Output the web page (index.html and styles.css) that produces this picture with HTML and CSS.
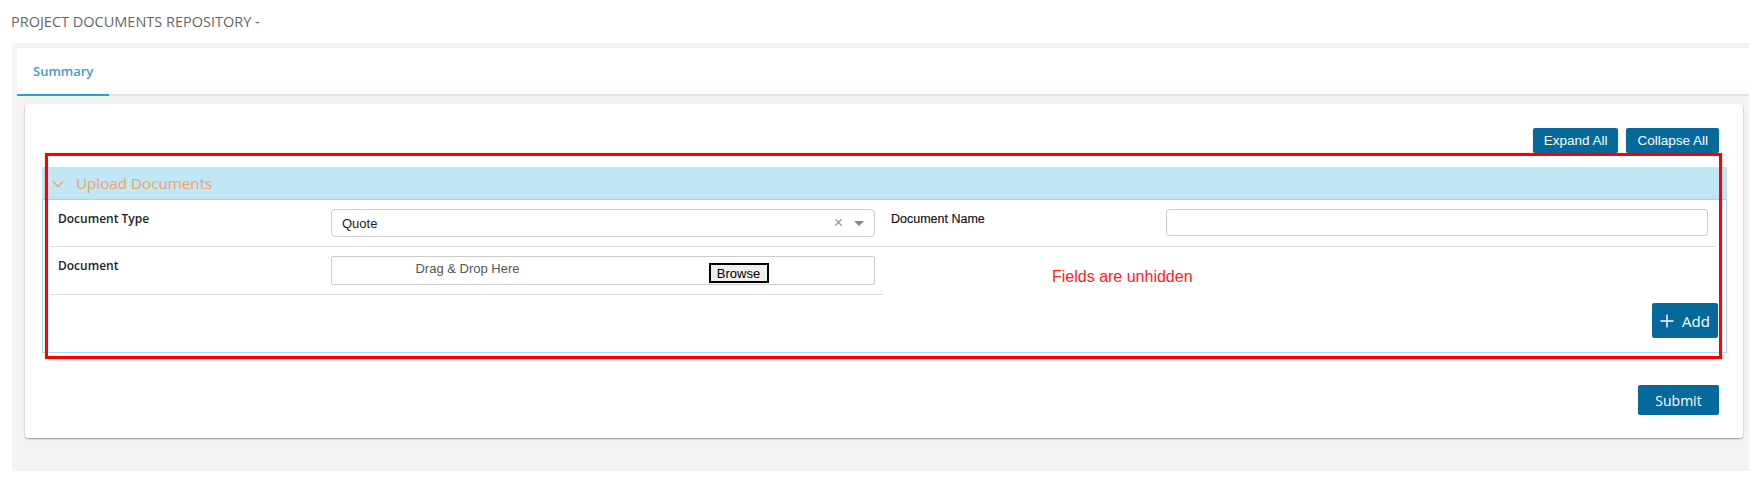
FILE: index.html
```html
<!DOCTYPE html>
<html lang="en">
<head>
<meta charset="utf-8">
<title>Project Documents Repository</title>
<link rel="stylesheet" href="styles.css">
</head>
<body>
<div class="page">
  <h1 class="page-title">PROJECT DOCUMENTS REPOSITORY -</h1>
  <div class="shell">
    <div class="tabs">
      <div class="tab active">Summary</div>
    </div>
    <div class="card">
      <div class="toolbar">
        <button class="btn btn-sm">Expand All</button>
        <button class="btn btn-sm">Collapse All</button>
      </div>
      <section class="accordion">
        <div class="acc-header">
          <svg class="chevron" width="12" height="8" viewBox="0 0 12 8"><path d="M1 1.5 L6 6.5 L11 1.5" fill="none" stroke="#f2a45a" stroke-width="1.5"/></svg>
          <span class="acc-title">Upload Documents</span>
        </div>
        <div class="acc-body">
          <div class="grid">
            <div class="field">
              <label class="field-label">Document Type</label>
              <div class="select">
                <span class="select-value">Quote</span>
                <span class="select-clear">×</span>
                <span class="select-arrow"></span>
              </div>
            </div>
            <div class="field">
              <label class="field-label alt">Document Name</label>
              <div class="text-input"></div>
            </div>
            <div class="field">
              <label class="field-label">Document</label>
              <div class="dropzone">
                <span class="drop-half drop-text">Drag &amp; Drop Here</span>
                <span class="drop-half"><span class="browse">Browse</span></span>
              </div>
            </div>
          </div>
          <div class="acc-actions">
            <button class="btn btn-add">
              <svg width="14" height="14" viewBox="0 0 14 14"><path d="M7 0.5 V13.5 M0.5 7 H13.5" stroke="#fff" stroke-width="1.4"/></svg>
              <span>Add</span>
            </button>
          </div>
        </div>
      </section>
      <div class="card-actions">
        <button class="btn btn-submit">Submit</button>
      </div>
    </div>
  </div>
  <div class="annot-box"></div>
  <div class="annot-text">Fields are unhidden</div>
</div>
</body>
</html>
```

FILE: styles.css
```css
html, body {
  margin: 0;
  padding: 0;
  background: #ffffff;
}

.page {
  position: relative;
  font-family: "Open Sans", "Noto Sans", sans-serif;
  color: #222;
}

.page-title {
  margin: 0;
  padding: 13px 0 0 11px;
  font-size: 14.5px;
  line-height: 18px;
  font-weight: 400;
  color: #666;
  letter-spacing: 0;
}

.shell {
  margin: 12px 0 0 12px;
  background: #f5f4f2;
  padding: 5px 0 33px 5px;
}

.tabs {
  display: flex;
  background: #ffffff;
  height: 46px;
  border-bottom: 2px solid #dde2e7;
}

.tab {
  padding: 0 16px;
  line-height: 46px;
  font-size: 13px;
  font-weight: 600;
  color: #3d9fcb;
}

.tab.active {
  border-bottom: 2px solid #2aa0cc;
  margin-bottom: -2px;
}

.card {
  margin: 8px 6px 0 8px;
  background: #ffffff;
  border-radius: 3px;
  box-shadow: 0 1px 2px rgba(0, 0, 0, 0.4);
  padding: 24px 16px 23px 17px;
}

.btn {
  border: none;
  background: #06699c;
  color: #ffffff;
  border-radius: 2px;
  cursor: pointer;
  padding: 0;
}

.toolbar {
  display: flex;
  justify-content: flex-end;
  gap: 8px;
  padding-right: 8px;
  margin-bottom: 14px;
}

.btn-sm {
  height: 25px;
  padding: 0 11px;
  font-family: "Liberation Sans", Arial, sans-serif;
  font-size: 13.5px;
  box-shadow: 0 1px 2px rgba(0, 0, 0, 0.15);
}

.accordion {
  display: block;
}

.acc-header {
  display: flex;
  align-items: center;
  height: 32px;
  background: #c1e6f6;
  border-bottom: 1px solid #9fd9f1;
  padding-left: 10px;
}

.chevron {
  display: block;
  margin-right: 12px;
  margin-top: 1px;
}

.acc-title {
  font-size: 15.2px;
  color: #f2a45a;
}

.acc-body {
  border: 1px solid #a9dcf2;
  border-top: none;
  padding: 0 10px 14px 7px;
}

.grid {
  display: grid;
  grid-template-columns: 1fr 1fr;
}

.field {
  display: flex;
  align-items: flex-start;
  padding: 9px 8px;
  border-bottom: 1px solid #dcdcdc;
}

.field-label {
  flex: none;
  width: 273px;
  font-size: 12px;
  font-weight: 600;
  line-height: 20px;
  color: #1e1e1e;
}

.field-label.alt {
  width: 275px;
  font-family: "Liberation Sans", Arial, sans-serif;
  font-size: 12.5px;
  font-weight: 400;
  color: #111;
  -webkit-text-stroke: 0.15px #111;
}

.select {
  flex: 1;
  box-sizing: border-box;
  height: 28px;
  border: 1px solid #cccccc;
  border-radius: 4px;
  display: flex;
  align-items: center;
  padding: 0 10px 0 10px;
  font-family: "Liberation Sans", Arial, sans-serif;
  font-size: 13px;
  color: #222;
}

.select-value {
  flex: 1;
}

.select-clear {
  color: #999;
  font-size: 16px;
  margin-right: 11px;
  line-height: 1;
}

.select-arrow {
  width: 0;
  height: 0;
  border-left: 5px solid transparent;
  border-right: 5px solid transparent;
  border-top: 5px solid #888;
}

.text-input {
  flex: 1;
  box-sizing: border-box;
  height: 27px;
  border: 1px solid #cccccc;
  border-radius: 3px;
}

.dropzone {
  flex: 1;
  box-sizing: border-box;
  height: 29px;
  border: 1px solid #cccccc;
  border-radius: 2px;
  display: flex;
  font-family: "Liberation Sans", Arial, sans-serif;
  font-size: 13px;
}

.drop-half {
  flex: 1;
  display: flex;
  justify-content: center;
  align-items: center;
}

.drop-text {
  color: #555;
  align-items: flex-start;
  padding-top: 4px;
}

.browse {
  box-sizing: border-box;
  width: 60px;
  height: 20px;
  border: 2px solid #000;
  background: #efefef;
  color: #000;
  display: flex;
  align-items: center;
  justify-content: center;
  margin-top: 5px;
}

.acc-actions {
  display: flex;
  justify-content: flex-end;
  padding-top: 8px;
  margin-right: -2px;
}

.btn-add {
  height: 35px;
  width: 66px;
  display: flex;
  align-items: center;
  justify-content: center;
  gap: 8px;
  font-family: "Open Sans", "Noto Sans", sans-serif;
  font-size: 15px;
}

.btn-add svg {
  display: block;
}

.card-actions {
  display: flex;
  justify-content: flex-end;
  margin-top: 32px;
  padding-right: 8px;
}

.btn-submit {
  height: 30px;
  width: 81px;
  font-family: "Open Sans", "Noto Sans", sans-serif;
  font-size: 14px;
}

.annot-box {
  position: absolute;
  left: 45px;
  top: 153px;
  width: 1677px;
  height: 206px;
  box-sizing: border-box;
  border: 3px solid #ff0000;
  box-shadow: 0 0 1px rgba(255, 0, 0, 0.5);
}

.annot-text {
  position: absolute;
  left: 1052px;
  top: 268px;
  font-family: "Liberation Sans", Arial, sans-serif;
  font-size: 16px;
  color: #ff2020;
}
```
